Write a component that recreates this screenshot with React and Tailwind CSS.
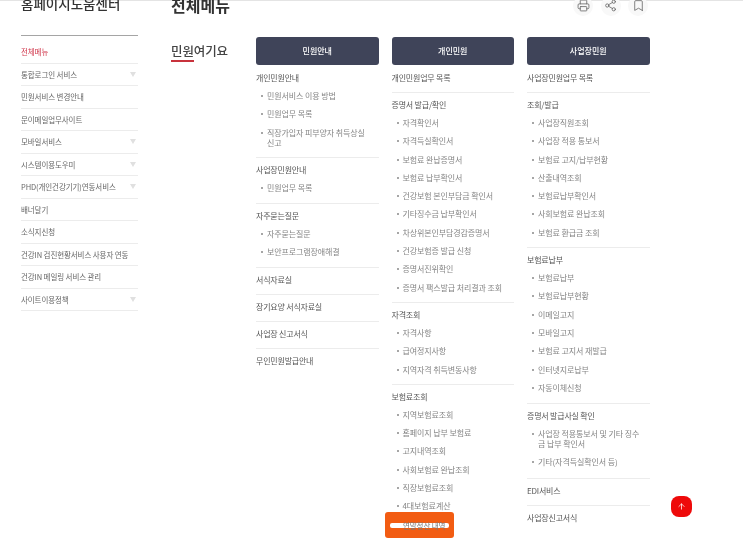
import { Printer, Share2, Bookmark, ArrowUp } from "lucide-react";

const SIDE_MENU = [
  { label: "전체메뉴", active: true },
  { label: "통합로그인 서비스", arrow: true },
  { label: "민원서비스 변경안내" },
  { label: "문이메일업무사이트" },
  { label: "모바일서비스", arrow: true },
  { label: "시스템이용도우미", arrow: true },
  { label: "PHD(개인건강기기)연동서비스", arrow: true },
  { label: "배너달기" },
  { label: "소식지신청" },
  { label: "건강IN 검진현황서비스 사용자 연동" },
  { label: "건강IN 메일링 서비스 관리" },
  { label: "사이트이용정책", arrow: true },
];

const COLUMNS = [
  {
    title: "민원안내",
    sections: [
      { title: "개인민원안내", items: ["민원서비스 이용 방법", "민원업무 목록", "직장가입자 피부양자 취득상실 신고"] },
      { title: "사업장민원안내", items: ["민원업무 목록"], pb: "pb-[10px]" },
      { title: "자주묻는질문", items: ["자주묻는질문", "보안프로그램장애해결"], pb: "pb-[10px]" },
      { title: "서식자료실" },
      { title: "장기요양 서식자료실" },
      { title: "사업장 신고서식" },
      { title: "무인민원발급안내" },
    ],
  },
  {
    title: "개인민원",
    sections: [
      { title: "개인민원업무 목록" },
      {
        title: "증명서 발급/확인",
        items: [
          "자격확인서",
          "자격득실확인서",
          "보험료 완납증명서",
          "보험료 납부확인서",
          "건강보험 본인부담금 확인서",
          "기타징수금 납부확인서",
          "차상위본인부담경감증명서",
          "건강보험증 발급 신청",
          "증명서진위확인",
          "증명서 팩스발급 처리결과 조회",
        ],
      },
      { title: "자격조회", items: ["자격사항", "급여정지사항", "지역자격 취득변동사항"] },
      {
        title: "보험료조회",
        items: ["지역보험료조회", "홈페이지 납부 보험료", "고지내역조회", "사회보험료 완납조회", "직장보험료조회", "4대보험료계산"],
      },
    ],
  },
  {
    title: "사업장민원",
    sections: [
      { title: "사업장민원업무 목록" },
      {
        title: "조회/발급",
        items: ["사업장직원조회", "사업장 적용 통보서", "보험료 고지/납부현황", "산출내역조회", "보험료납부확인서", "사회보험료 완납조회", "보험료 환급금 조회"],
      },
      {
        title: "보험료납부",
        items: ["보험료납부", "보험료납부현황", "이메일고지", "모바일고지", "보험료 고지서 재발급", "인터넷지로납부", "자동이체신청"],
        pb: "pb-[10px]",
      },
      {
        title: "증명서 발급사실 확인",
        items: ["사업장 적용통보서 및 기타 징수금 납부 확인서", "기타(자격득실확인서 등)"],
        pb: "pb-[11px]",
      },
      { title: "EDI서비스" },
      { title: "사업장신고서식" },
    ],
  },
];

function Section({ section, last }) {
  return (
    <div className={`pt-[7px] ${section.pb ?? "pb-[9px]"} ${last ? "" : "border-b border-[#ececec]"}`}>
      <div className="text-[8px] leading-[10px] tracking-[-0.2px] text-[#555]">{section.title}</div>
      {section.items ? (
        <ul className="mt-[8.3px] flex flex-col gap-[8.3px] pl-[5px] pr-[8px]">
          {section.items.map((item) => (
            <li key={item} className="flex text-[8px] leading-[10px] tracking-[-0.1px] text-[#858585]">
              <span className="mt-[4px] mr-[4px] h-[2px] w-[2px] shrink-0 rounded-full bg-[#888]" />
              <span>{item}</span>
            </li>
          ))}
        </ul>
      ) : null}
    </div>
  );
}

export default function App() {
  return (
    <div className="relative h-[538px] w-[743px] overflow-hidden bg-white font-['Noto_Sans_CJK_KR','Noto_Sans',sans-serif] blur-[0.5px]">
      <div className="h-px bg-[#e4e4e4]" />
      <div className="flex pl-[21px]">
        <aside className="w-[117px] shrink-0">
          <div className="-mt-[8px] h-[20px] whitespace-nowrap text-[13.5px] font-medium leading-[20px] text-[#333]">홈페이지도움센터</div>
          <ul className="mt-[22px] border-t-[1px] border-[#a5a5a5] pt-[5px]">
            {SIDE_MENU.map((m) => (
              <li
                key={m.label}
                className={`flex h-[22.5px] items-center justify-between border-b border-[#ececec] text-[7.5px] tracking-[-0.1px] ${
                  m.active ? "text-[#d0354a]" : "text-[#666]"
                }`}
              >
                <span className="whitespace-nowrap">{m.label}</span>
                {m.arrow ? (
                  <svg width="6" height="5" viewBox="0 0 6 5" className="mr-[2px]">
                    <polygon points="0,0 6,0 3,5" fill="#e0e0e0" />
                  </svg>
                ) : null}
              </li>
            ))}
          </ul>
        </aside>

        <main className="ml-[33px] flex-1">
          <div className="flex h-[20px] items-center pr-[95px]">
            <h1 className="-mt-[12px] text-[16px] font-bold leading-[20px] text-[#333]">전체메뉴</h1>
            <div className="ml-auto -mt-[11px] flex gap-[7.5px]">
              {[Printer, Share2, Bookmark].map((Icon, i) => (
                <span key={i} className="flex h-[20px] w-[20px] items-center justify-center rounded-full bg-[#f8f8f8]">
                  <Icon size={13} strokeWidth={1.5} className="text-[#666]" />
                </span>
              ))}
            </div>
          </div>

          <div className="mt-[16px] flex">
            <div className="w-[85px] shrink-0">
              <div className="-mt-[1px] inline-block whitespace-nowrap text-[12.5px] font-medium leading-[17px] tracking-[-0.1px] text-[#444]">
                <span className="border-b-2 border-[#c8323c]">민원</span>여기요
              </div>
            </div>
            <div className="flex gap-[13px]">
              {COLUMNS.map((col) => (
                <div key={col.title} className="w-[122.5px]">
                  <div className="mb-[0.7px] flex h-[28px] items-center justify-center rounded-[3px] bg-[#3f4459] text-[8px] font-medium text-white">
                    {col.title}
                  </div>
                  {col.sections.map((s, i) => (
                    <Section key={s.title} section={s} last={i === col.sections.length - 1} />
                  ))}
                </div>
              ))}
            </div>
          </div>
        </main>
      </div>

      <div className="absolute left-[385px] top-[512px] h-[26px] w-[69px] rounded-[3px] bg-[#f25c12]">
        <div className="relative mx-[5px] mt-[11px] flex h-[5px] items-center rounded-[2px] bg-white pl-[13px]">
          <span className="whitespace-nowrap text-[7.5px] leading-[10px] tracking-[-0.1px] text-[#777]">연말정산 내역</span>
        </div>
      </div>

      <button className="absolute left-[671px] top-[496px] flex h-[21px] w-[21px] items-center justify-center rounded-[8px] bg-[#ee0a0a] text-white">
        <ArrowUp size={9} strokeWidth={2} />
      </button>
    </div>
  );
}
